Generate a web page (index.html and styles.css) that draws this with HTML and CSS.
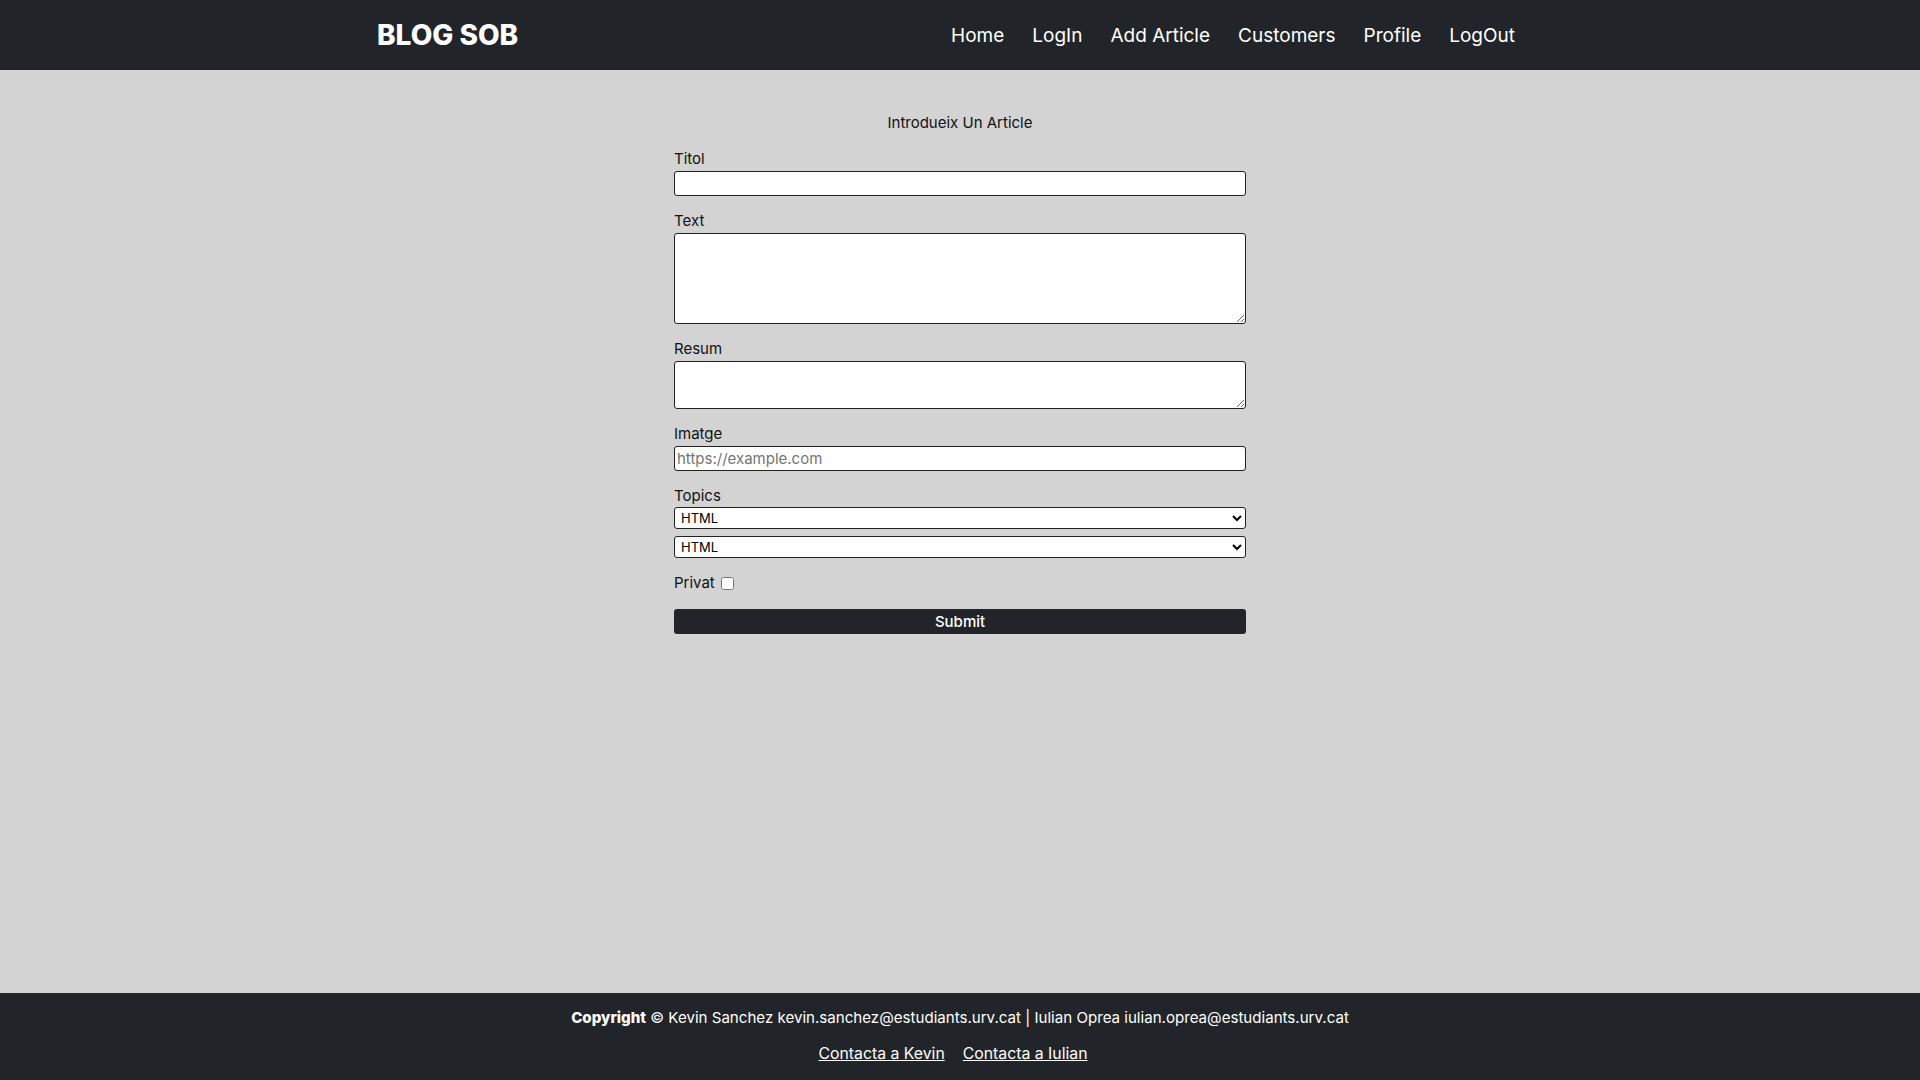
FILE: index.html
```html
<!DOCTYPE html>
<html lang="ca">
<head>
<meta charset="utf-8">
<title>Blog SOB - Add Article</title>
<link rel="stylesheet" href="styles.css">
</head>
<body>
<header class="topbar">
  <div class="topbar-inner">
    <a class="brand" href="#">BLOG SOB</a>
    <nav class="nav">
      <a href="#">Home</a>
      <a href="#">LogIn</a>
      <a href="#">Add Article</a>
      <a href="#">Customers</a>
      <a href="#">Profile</a>
      <a href="#">LogOut</a>
    </nav>
  </div>
</header>
<main class="main">
  <form class="article-form">
    <h1 class="form-title">Introdueix Un Article</h1>
    <div class="group">
      <label for="titol">Titol</label>
      <input id="titol" class="field" type="text">
    </div>
    <div class="group">
      <label for="text">Text</label>
      <textarea id="text" class="field area-big"></textarea>
    </div>
    <div class="group">
      <label for="resum">Resum</label>
      <textarea id="resum" class="field area-small"></textarea>
    </div>
    <div class="group">
      <label for="imatge">Imatge</label>
      <input id="imatge" class="field" type="url" placeholder="https://example.com">
    </div>
    <div class="group">
      <label for="topic1">Topics</label>
      <select id="topic1" class="field sel"><option>HTML</option></select>
      <select class="field sel sel2"><option>HTML</option></select>
    </div>
    <div class="group check-row">
      <label for="privat">Privat</label>
      <input id="privat" type="checkbox" class="check">
    </div>
    <button type="button" class="submit">Submit</button>
  </form>
</main>
<footer class="footer">
  <p class="copy"><strong>Copyright</strong> © Kevin Sanchez kevin.sanchez@estudiants.urv.cat | Iulian Oprea iulian.oprea@estudiants.urv.cat</p>
  <p class="links"><a href="#">Contacta a Kevin</a><a href="#">Contacta a Iulian</a></p>
</footer>
</body>
</html>
```
FILE: styles.css
```css
* { box-sizing: border-box; }
html, body { margin: 0; padding: 0; }
body {
  font-family: Inter, "Open Sans", sans-serif;
  background: #d3d3d3;
  color: #111;
  min-height: 100vh;
  display: flex;
  flex-direction: column;
}
.topbar {
  background: #212529;
  height: 70px;
  flex: none;
}
.topbar-inner {
  height: 100%;
  display: flex;
  align-items: center;
  justify-content: space-between;
  padding: 0 405px 0 377px;
}
.brand {
  color: #fff;
  text-decoration: none;
  font-weight: 800;
  font-size: 28px;
  letter-spacing: 0;
}
.nav {
  display: flex;
  gap: 28px;
}
.nav a {
  color: #fff;
  text-decoration: none;
  font-size: 19px;
}
.main {
  flex: 1;
  padding-top: 42px;
}
.article-form {
  width: 572px;
  margin: 0 auto;
  display: flex;
  flex-direction: column;
}
.form-title {
  margin: 0 0 14px;
  font-size: 15px;
  font-weight: 400;
  line-height: 22px;
  text-align: center;
}
.group {
  display: flex;
  flex-direction: column;
  margin-bottom: 14px;
}
.group label {
  font-size: 15px;
  line-height: 22px;
}
.field {
  display: block;
  width: 100%;
  margin: 1px 0 0;
  border: 1px solid #222;
  border-radius: 3px;
  background: #fff;
  font-family: inherit;
  font-size: 15px;
  padding: 1px 2px;
}
input.field { height: 25px; }
.area-big { height: 91px; resize: vertical; }
.area-small { height: 48px; resize: vertical; }
.field::placeholder { color: #757575; }
.sel {
  height: 22px;
  font-size: 13px;
  padding: 0 2px;
  color: #000;
  margin-top: 0;
}
.sel2 { margin-top: 7px; }
.check-row {
  flex-direction: row;
  align-items: center;
  gap: 6px;
  margin-bottom: 15px;
}
.check {
  width: 13px;
  height: 13px;
  margin: 0;
}
.submit {
  height: 25px;
  border: none;
  border-radius: 3px;
  background: #212529;
  color: #fff;
  font-family: inherit;
  font-size: 15px;
  font-weight: 500;
  padding: 0;
}
.footer {
  flex: none;
  height: 87px;
  background: #212529;
  color: #fff;
  text-align: center;
  padding-top: 13px;
}
.copy {
  margin: 0;
  font-size: 15.1px;
  line-height: 24px;
}
.copy strong { font-weight: 800; }
.links {
  margin: 12px 0 0;
  padding-right: 14px;
  font-size: 15.8px;
  line-height: 24px;
  display: flex;
  justify-content: center;
  gap: 18px;
}
.links a { color: #fff; }
```
